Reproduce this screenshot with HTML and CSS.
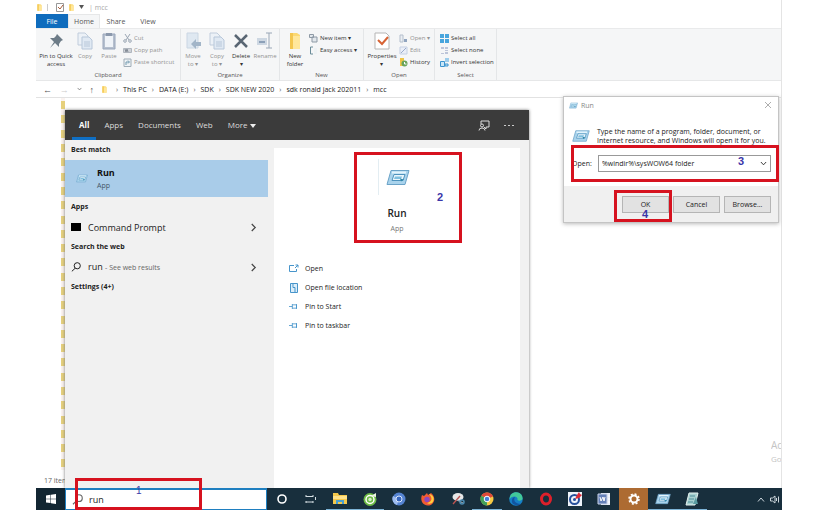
FILE: index.html
```html
<!DOCTYPE html>
<html lang="en">
<head>
<meta charset="utf-8">
<title>Run</title>
<link rel="stylesheet" href="styles.css">
</head>
<body>
<svg class="defs" aria-hidden="true">
  <symbol id="run" viewBox="0 0 24 16">
    <path d="M5 1h18l-4 14H1z" fill="#a9d3ec" stroke="#6ba3c8"/>
    <path d="M6 3h14" stroke="#e3f4fd" stroke-width="2"/>
    <path d="M8 5h11l-2 6H6z" fill="#eaf6fc" stroke="#4f93bd"/>
    <path d="M9 7h7l-1 2.500H8z" fill="#7fbfdf"/>
    <path d="M14 9l4 1-3 2z" fill="#2f86a8"/>
  </symbol>
  <symbol id="chev" viewBox="0 0 8 10"><path d="M2 1l4 4-4 4" fill="none" stroke="currentColor" stroke-width="1.400"/></symbol>
  <symbol id="down" viewBox="0 0 8 5"><path d="M1 .8L4 4 7 .8" fill="none" stroke="currentColor"/></symbol>
  <symbol id="lens" viewBox="0 0 12 12"><circle cx="7.500" cy="4.500" r="3.700" fill="none" stroke="currentColor" stroke-width="1.200"/><path d="M5 7.500L1 11.200" stroke="currentColor" stroke-width="1.200"/></symbol>
  <symbol id="folder" viewBox="0 0 12 18"><path d="M1 1h7l3 2v14H1z" fill="#fbd872"/><path d="M4 4h7v13H4z" fill="#ffe79b"/><path d="M1 1h3v16H1z" fill="#f3c64f"/></symbol>
  <symbol id="copy" viewBox="0 0 16 18"><path d="M1 1h7l3 3v9H1z" fill="#eaf0f7" stroke="#b4c3d6"/><path d="M5 5h7l3 3v9H5z" fill="#dbe6f3" stroke="#a9bcd3"/><path d="M7 10h6M7 12h6M7 14h6" stroke="#a9bcd3"/></symbol>
  <symbol id="pin" viewBox="0 0 12 8"><path d="M0 4h4M4 1v6M4 2h5v4H4M9 1v6" fill="none" stroke="#4795cb"/></symbol>
</svg>

<main class="desktop">
  <section class="explorer">
    <header class="titlebar">
      <svg width="5" height="9"><use href="#folder"/></svg>
      <span class="bar"></span>
      <svg width="8" height="9" viewBox="0 0 8 9"><path d="M.5.5h7v8h-7z" fill="#fff" stroke="#999"/><path d="M2 4l2 2 3-4" fill="none" stroke="#a65c3c"/></svg>
      <svg width="5" height="9"><use href="#folder"/></svg>
      <svg width="5" height="4" viewBox="0 0 5 4"><path d="M0 0h5L2.500 4z" fill="#555"/></svg>
      <span class="title">| mcc</span>
    </header>
    <nav class="tabs">
      <button class="tab file">File</button><button class="tab active">Home</button><button class="tab">Share</button><button class="tab">View</button>
    </nav>
    <div class="ribbon">
      <section class="group clipboard">
        <div class="tools">
          <button class="big wide"><svg width="16" height="18" viewBox="0 0 16 18"><path d="M9 2l6 6-2 1-2 3v3l-4-4-5 5 4-6-4-4 4 0 2-2z" fill="#6c7b87"/></svg><span>Pin to Quick<br>access</span></button>
          <button class="big off"><svg width="16" height="18"><use href="#copy"/></svg><span>Copy</span></button>
          <button class="big off"><svg width="16" height="18" viewBox="0 0 16 18"><path d="M2 2h12v15H2z" fill="#a6b2c4" stroke="#8293ad"/><path d="M4 4h8v11H4z" fill="#eef3f9"/><path d="M5 1h6v3H5z" fill="#71819a"/></svg><span>Paste</span></button>
          <div class="stack off">
            <button><svg width="9" height="9" viewBox="0 0 9 9"><path d="M2 0l4 6M7 0L3 6" stroke="#8593a3"/><circle cx="2" cy="7" r="1.300" fill="none" stroke="#8593a3"/><circle cx="7" cy="7" r="1.300" fill="none" stroke="#8593a3"/></svg>Cut</button>
            <button><svg width="9" height="9" viewBox="0 0 9 9"><path d="M.5 2.500h8v4h-8z" fill="#c6cbd2" stroke="#9fa7b1"/><path d="M2 3l1 3 1-3 1 3" fill="none" stroke="#68727e"/></svg>Copy path</button>
            <button><svg width="9" height="9" viewBox="0 0 9 9"><path d="M1 1h7v7.500H1z" fill="#eef3f6" stroke="#8b9ba8"/><path d="M3 7V4h3M5 2.500L6.500 4 5 5.500" fill="none" stroke="#53839e"/></svg>Paste shortcut</button>
          </div>
        </div>
        <h2>Clipboard</h2>
      </section>
      <section class="group organize">
        <div class="tools">
          <button class="big off"><svg width="16" height="18" viewBox="0 0 16 18"><path d="M2 1h11v15H2z" fill="#dae5f0" stroke="#c0cfde"/><path d="M16 10v4h-5v3l-5-5 5-5v3z" fill="#8ea6bd"/></svg><span>Move<br>to ▾</span></button>
          <button class="big off"><svg width="16" height="18"><use href="#copy"/></svg><span>Copy<br>to ▾</span></button>
          <button class="big"><svg width="16" height="18" viewBox="0 0 16 18"><path d="M2 3l12 12M14 3L2 15" stroke="#596673" stroke-width="2.500"/></svg><span>Delete<br>▾</span></button>
          <button class="big off"><svg width="16" height="18" viewBox="0 0 16 18"><path d="M0 6h10v7H0z" fill="#c4d0de"/><path d="M2 9h6v2H2z" fill="#728ba9"/><path d="M9 1h6M12 1v15M9 16h6" fill="none" stroke="#8394a8"/></svg><span>Rename</span></button>
        </div>
        <h2>Organize</h2>
      </section>
      <section class="group new">
        <div class="tools">
          <button class="big"><svg width="14" height="18"><use href="#folder"/></svg><span>New<br>folder</span></button>
          <div class="stack">
            <button><svg width="9" height="9" viewBox="0 0 9 9"><path d="M.5.5h4v3h-4zM3 3h5v5H3z" fill="#e2e7ec" stroke="#8d99a5"/></svg>New item ▾</button>
            <button><svg width="9" height="9" viewBox="0 0 9 9"><path d="M4 1H1.500v7H4" fill="none" stroke="#6b8c99"/><path d="M5 2h3v6H5z" fill="#eef2f4"/></svg>Easy access ▾</button>
          </div>
        </div>
        <h2>New</h2>
      </section>
      <section class="group open">
        <div class="tools">
          <button class="big props"><svg width="16" height="18" viewBox="0 0 16 18"><path d="M1 1h11l3 3v13H1z" fill="#fff" stroke="#b5b5b5"/><path d="M4 8l4 4 6-7" fill="none" stroke="#d76334" stroke-width="2"/></svg><span>Properties<br>▾</span></button>
          <div class="stack">
            <button class="off"><svg width="9" height="9" viewBox="0 0 9 9"><path d="M1 1h3v7H1z" fill="#e8edf3" stroke="#a5b2c2"/><path d="M5 5h3v3H5z" fill="#7790b2"/></svg>Open ▾</button>
            <button class="off"><svg width="9" height="9" viewBox="0 0 9 9"><path d="M1 1h7v7H1z" fill="#e8edf7" stroke="#b9c7df"/><path d="M2 7l5-5" stroke="#8399c0"/></svg>Edit</button>
            <button><svg width="9" height="9" viewBox="0 0 9 9"><path d="M1 0h4v8H1z" fill="#edc547"/><circle cx="5.500" cy="5.500" r="3" fill="#69a45c"/><path d="M5.500 4v2h2" fill="none" stroke="#fff"/></svg>History</button>
          </div>
        </div>
        <h2>Open</h2>
      </section>
      <section class="group select">
        <div class="tools">
          <div class="stack">
            <button><svg width="9" height="9" viewBox="0 0 9 9"><path d="M0 0h4v4H0zM5 0h4v4H5zM0 5h4v4H0zM5 5h4v4H5z" fill="#48a5dd"/></svg>Select all</button>
            <button><svg width="9" height="9" viewBox="0 0 9 9"><path d="M1 1h3v2H1zM5 1h3v2H5zM5 4h3v1H5zM1 7h3v1H1zM5 6h3v2H5z" fill="#bdc5d9"/></svg>Select none</button>
            <button><svg width="9" height="9" viewBox="0 0 9 9"><path d="M5 0h4v4H5z" fill="#9ecdeb"/><path d="M.5 3.500h4v5h-4zM5 6h3v2H5z" fill="#cae6f7" stroke="#3c94cf"/></svg>Invert selection</button>
          </div>
        </div>
        <h2>Select</h2>
      </section>
    </div>
    <nav class="address">
      <span class="arrows"><span>←</span><span class="faint">→</span><svg width="5" height="4"><use href="#down"/></svg><span>↑</span></span>
      <svg width="5" height="9"><use href="#folder"/></svg>
      <ol>
        <li>This PC</li><li>DATA (E:)</li><li>SDK</li><li>SDK NEW 2020</li><li>sdk ronald jack 202011</li><li>mcc</li>
      </ol>
    </nav>
    <div class="files">
      <ul class="tree"><li></li><li></li><li></li><li></li><li></li><li></li><li></li><li></li><li></li><li></li><li></li><li></li><li></li><li></li><li></li><li></li><li></li><li></li><li></li><li></li><li></li><li></li><li></li><li></li><li></li><li></li></ul>
      <p class="watermark">Ac<br><small>Go</small></p>
    </div>
    <footer class="status">17 items</footer>
  </section>

  <section class="search">
    <nav class="scopes">
      <button class="scope on">All</button><button class="scope">Apps</button><button class="scope">Documents</button><button class="scope">Web</button><button class="scope">More <svg width="6" height="4" viewBox="0 0 6 4"><path d="M0 0h6L3 4z" fill="#eee"/></svg></button>
      <span class="extras">
        <svg width="12" height="11" viewBox="0 0 12 11"><path d="M3 4V1h8v6H8v2L6 7" fill="none" stroke="#ddd"/><circle cx="4" cy="5.500" r="1.500" fill="none" stroke="#ddd"/><path d="M1 10.500Q1 8 4 8t3 2.500" fill="none" stroke="#ddd"/></svg>
        <svg width="10" height="3" viewBox="0 0 10 3"><path d="M0 1h2v1H0zM4 1h2v1H4zM8 1h2v1H8z" fill="#ccc"/></svg>
      </span>
    </nav>
    <div class="panes">
      <div class="results">
        <h3>Best match</h3>
        <a class="best" href="#run"><svg width="12" height="9"><use href="#run"/></svg><span><b>Run</b><small>App</small></span></a>
        <h3>Apps</h3>
        <a class="row" href="#cmd"><svg width="10" height="8" viewBox="0 0 10 8"><path d="M0 0h10v8H0z"/></svg><span>Command Prompt</span><svg class="go" width="7" height="9"><use href="#chev"/></svg></a>
        <h3>Search the web</h3>
        <a class="row" href="#web"><svg width="10" height="10"><use href="#lens"/></svg><span>run <small>- See web results</small></span><svg class="go" width="7" height="9"><use href="#chev"/></svg></a>
        <h3>Settings (4+)</h3>
      </div>
      <div class="detail">
        <div class="app">
          <span class="tile"><svg width="24" height="17"><use href="#run"/></svg></span>
          <b>Run</b><small>App</small>
          <span class="mark box2"><i>2</i></span>
        </div>
        <ul class="actions">
          <li><a href="#open"><svg width="10" height="9" viewBox="0 0 10 9"><path d="M5 1.500H.5v6h7V5M6 4l3-3M6.500 1H9v2.500" fill="none" stroke="#4795cb"/></svg>Open</a></li>
          <li><a href="#loc"><svg width="10" height="10" viewBox="0 0 10 10"><path d="M1.500.5h7v9h-7zM4 .5v4h2V9" fill="#dceefa" stroke="#4795cb"/></svg>Open file location</a></li>
          <li><a href="#start"><svg width="10" height="7"><use href="#pin"/></svg>Pin to Start</a></li>
          <li><a href="#bar"><svg width="10" height="7"><use href="#pin"/></svg>Pin to taskbar</a></li>
        </ul>
      </div>
    </div>
  </section>

  <form class="dialog">
    <header><svg width="9" height="7"><use href="#run"/></svg><span>Run</span><svg class="close" width="6" height="6" viewBox="0 0 6 6"><path d="M0 0l6 6M6 0L0 6" stroke="#999" stroke-width=".8"/></svg></header>
    <p class="intro"><svg width="18" height="14"><use href="#run"/></svg><span>Type the name of a program, folder, document, or<br>Internet resource, and Windows will open it for you.</span></p>
    <div class="field"><label for="cmdline">Open:</label><span class="combo"><input id="cmdline" type="text" value="%windir%\sysWOW64 folder"><svg width="7" height="5"><use href="#down"/></svg></span></div>
    <footer><button type="button" class="ok">OK</button><button type="button">Cancel</button><button type="button">Browse...</button></footer>
    <span class="mark box3"><i>3</i></span>
    <span class="mark box4"><i>4</i></span>
  </form>

  <nav class="taskbar">
    <button class="start" aria-label="Start"><svg width="10" height="10" viewBox="0 0 10 10"><path d="M0 1.500l4.500-.7v3.900H0zM5 .7L10 0v4.700H5zM0 5.200h4.500v3.900L0 8.500zM5 5.200h5V10l-5-.8z" fill="#fff"/></svg></button>
    <div class="find"><label for="q"><svg width="11" height="11"><use href="#lens"/></svg></label><input id="q" type="text" value="run" aria-label="Search"><span class="mark box1"><i>1</i></span></div>
    <div class="pinned">
      <button aria-label="Cortana"><svg width="16" height="16" viewBox="0 0 16 16"><circle cx="8" cy="8" r="4" fill="none" stroke="#fff" stroke-width="1.600"/></svg></button>
      <button aria-label="Task view"><svg width="16" height="16" viewBox="0 0 16 16"><path d="M3 5.500h7M3 11h7M3 4v2M10 4v2M3 10v2M10 10v2M12.500 6v3" fill="none" stroke="#d5dfe4"/></svg></button>
      <button class="live" aria-label="Files"><svg width="16" height="16" viewBox="0 0 16 16"><path d="M1 2h5l1 2h8v9H1z" fill="#f4c84b"/><path d="M1 5h14v3H1z" fill="#ffe28a"/><path d="M4 13V9h8v4H10v-2H6v2z" fill="#4ba0d0"/></svg></button>
      <button class="live" aria-label="Coc Coc"><svg width="16" height="16" viewBox="0 0 16 16"><circle cx="8" cy="8.500" r="6.500" fill="#6cbb45"/><circle cx="8" cy="8.500" r="4" fill="none" stroke="#fff" stroke-width="1.500"/><circle cx="8" cy="8.500" r="1.700" fill="#d9efcb"/><path d="M9 5l5-3v4z" fill="#e9f5df"/></svg></button>
      <button aria-label="Chromium"><svg width="16" height="16" viewBox="0 0 16 16"><circle cx="8" cy="8" r="6.500" fill="#5584d2"/><path d="M8 8L2 5a6.500 6.500 0 0 0 4 9z" fill="#9dbcf0"/><circle cx="8" cy="8" r="3" fill="#3565bd" stroke="#dce8fb"/></svg></button>
      <button aria-label="Firefox"><svg width="16" height="16" viewBox="0 0 16 16"><path d="M2 4l2 1 3-3 1 2 3-2c4 3 4 8 2 10-3 4-9 3-11-1-1-2-1-5 0-7z" fill="#f15b32"/><path d="M9 3c5 1 6 6 3 9-2 1-4 1-5 0 5-1 6-5 2-9z" fill="#ffcf3d"/><circle cx="7" cy="8.500" r="2.700" fill="#8f48bd"/></svg></button>
      <button aria-label="Snip"><svg width="16" height="16" viewBox="0 0 16 16"><ellipse cx="8" cy="6" rx="5.500" ry="4" fill="#e7e8e8"/><path d="M3 13l7-8" stroke="#bb5350" stroke-width="1.300"/><path d="M7 9l6 3" stroke="#8fa3b0" stroke-width="1.200"/><circle cx="12" cy="11" r="2" fill="none" stroke="#4d8bb1" stroke-width="1.500"/></svg></button>
      <button class="live" aria-label="Chrome"><svg width="16" height="16" viewBox="0 0 16 16"><circle cx="8" cy="8" r="6.500" fill="#f6c944"/><path d="M8 8L2.400 4.700A6.500 6.500 0 0 1 14 5.500z" fill="#df4939"/><path d="M8 8L2.400 4.700A6.500 6.500 0 0 0 8 14.500z" fill="#42a15a"/><circle cx="8" cy="8" r="2.800" fill="#467fda" stroke="#fff"/></svg></button>
      <button aria-label="Edge"><svg width="16" height="16" viewBox="0 0 16 16"><circle cx="8" cy="8" r="6.800" fill="#1680c8"/><path d="M1.500 8C2 3 5 1 8.500 1.200 13 1.500 15 5 14.500 8c-1 2-4 2-5 1 1-4-5-5-8-1z" fill="#42c99a"/><path d="M7 6c-2 3 0 7 6 7-5 3-10 0-9-4 0-2 2-3 3-3z" fill="#1255a0"/></svg></button>
      <button aria-label="Opera"><svg width="16" height="16" viewBox="0 0 16 16"><ellipse cx="8" cy="8" rx="4.500" ry="5" fill="none" stroke="#de202b" stroke-width="3"/></svg></button>
      <button aria-label="Target"><svg width="16" height="16" viewBox="0 0 16 16"><path d="M1 1h14v14H1z" fill="#eef3fa"/><circle cx="7.500" cy="8.500" r="4.500" fill="none" stroke="#264f9b" stroke-width="2"/><circle cx="7.500" cy="8.500" r="1.500" fill="#264f9b"/><path d="M8 8l2-4 2-3 1 2 2 1-3 3z" fill="#dc2937"/></svg></button>
      <button aria-label="Word"><svg width="16" height="16" viewBox="0 0 16 16"><path d="M5 2h9v12H5z" fill="#e8edf7"/><path d="M2 3h9v10H2z" fill="#6480b8" stroke="#c8d3e8"/><path d="M4 6l1 4 2-4 1 4 1-4M12 5h2M12 8h2M12 11h2" fill="none" stroke="#fff"/></svg></button>
      <button class="gear" aria-label="Settings"><svg width="16" height="16" viewBox="0 0 16 16"><circle cx="8" cy="8" r="3.500" fill="none" stroke="#fff" stroke-width="2"/><circle cx="8" cy="8" r="5" fill="none" stroke="#fff" stroke-width="1.500" stroke-dasharray="2 1.930"/></svg></button>
      <button class="live" aria-label="Run"><svg width="16" height="12"><use href="#run"/></svg></button>
      <button class="live" aria-label="Notepad"><svg width="16" height="16" viewBox="0 0 16 16"><path d="M5 2h9l-3 12H2z" fill="#a7d0cf" stroke="#e4f1ee"/><path d="M6 5h5M5 8h5M4 11h5" stroke="#4e8f99"/><path d="M12 6l2 7H9z" fill="#5a9ba0"/></svg></button>
    </div>
    <div class="tray"><svg width="8" height="5" viewBox="0 0 8 5"><path d="M1 4.500L4 1l3 3.500" fill="none" stroke="#ccd6dc"/></svg><svg width="10" height="9" viewBox="0 0 10 9"><path d="M.5 3h2L5 1v7L2.500 6h-2zM6.500 3v3M8.500 1.500v6" fill="none" stroke="#ccd6dc"/></svg></div>
  </nav>
</main>
</body>
</html>
```
FILE: styles.css
```css
* { box-sizing: border-box; }
body {
  margin: 0;
  background: #fff;
  color: #222;
  font: 7px/9px "Open Sans", "Noto Sans", sans-serif;
}
h2, h3, p, ul, ol { margin: 0; padding: 0; font-weight: 400; list-style: none; }
button, input { font: inherit; color: inherit; border: 0; padding: 0; margin: 0; background: none; }
a { color: inherit; text-decoration: none; }
small { font-size: 7px; }
svg { flex: none; }
.defs { position: absolute; width: 0; height: 0; }

.desktop {
  position: relative;
  display: flex;
  flex-direction: column;
  min-height: 100vh;
  margin: 0 33px 0 36px;
  overflow: hidden;
}

/* Explorer window */
.explorer { flex: 1; display: flex; flex-direction: column; border-right: 1px solid #e4e4e4; }
.titlebar { display: flex; align-items: center; gap: 5px; height: 14px; padding-left: 1px; color: #aaa; }
.titlebar .bar { width: 1px; height: 7px; margin-right: 3px; background: #ccc; }
.tabs { display: flex; height: 14px; }
.tab { width: 32px; color: #555; }
.tab.file { background: #0f6cbd; color: #fff; }
.tab.active { background: #f5f6f7; border: 1px solid #e6e7e8; border-bottom: 0; }
.ribbon {
  display: flex;
  height: 53px;
  background: #f5f6f7;
  border-top: 1px solid #e9eaeb;
  border-bottom: 1px solid #e6e7e8;
  color: #333;
  font-size: 6px;
  line-height: 8px;
}
.group { display: flex; flex-direction: column; border-right: 1px solid #e4e6e8; }
.clipboard { width: 145px; }
.organize { width: 99px; }
.new { width: 84px; }
.open { width: 71px; }
.select { width: 62px; }
.tools { flex: 1; display: flex; padding: 3px 0 0 3px; }
.organize .tools { padding-left: 0; }
.group h2 { font-size: 6px; text-align: center; line-height: 9px; color: #555; }
.big { display: flex; flex-direction: column; align-items: center; gap: 2px; width: 24px; white-space: nowrap; }
.big.wide { width: 34px; }
.big.props { width: 30px; }
.off { color: #929292; }
.off svg { opacity: .8; }
.stack { display: flex; flex-direction: column; padding-left: 2px; }
.stack button { display: flex; align-items: center; gap: 2px; height: 12px; white-space: nowrap; }

.address { display: flex; align-items: center; height: 17px; border-bottom: 1px solid #e2e2e2; padding-left: 7px; white-space: nowrap; }
.arrows { display: flex; align-items: center; justify-content: space-between; width: 51px; margin-right: 8px; font-size: 9px; color: #555; }
.arrows .faint { color: #ccc; }
.address ol { display: flex; padding-left: 4px; }
.address li::before { content: "›"; padding: 0 5px; color: #555; }

.files { flex: 1; position: relative; display: flex; justify-content: space-between; padding-left: 25px; }
.tree { display: flex; flex-direction: column; justify-content: space-around; width: 4px; background: #fbf3f0; }
.tree li { height: 8px; background: #e6d07c; }
.watermark { align-self: flex-end; width: 10px; overflow: hidden; margin-bottom: 5px; color: #c4c4c4; font-size: 10px; line-height: 13px; }
.watermark small { font-size: 8px; }
.status { height: 18px; padding: 6px 0 0 8px; color: #666; font-size: 7px; }

/* Search flyout */
.search {
  position: absolute;
  left: 29px;
  top: 110px;
  bottom: 22px;
  width: 464px;
  display: flex;
  flex-direction: column;
  background: #f1f1f1;
  box-shadow: 0 0 3px #777;
}
.scopes { display: flex; height: 30px; padding-left: 7px; background: #3b3b3b; color: #ddd; font-size: 8px; }
.scope { padding: 0 7px; margin-right: 1px; border-bottom: 3px solid transparent; border-top: 2px solid transparent; }
.scope.on { color: #fff; font-weight: 700; border-bottom-color: #0f6fc4; }
.extras { display: flex; align-items: center; gap: 14px; margin-left: auto; padding-right: 15px; }
.panes { flex: 1; display: flex; }
.results { width: 203px; font-size: 9px; }
.results h3 { padding-left: 6px; font-size: 7px; font-weight: 700; line-height: 20px; }
.best { display: flex; align-items: center; gap: 9px; height: 37px; padding-left: 11px; background: #a9cce9; color: #111; }
.best span { display: flex; flex-direction: column; line-height: 13px; }
.best small { color: #456; }
.row { display: flex; align-items: center; gap: 7px; height: 20px; padding: 0 11px 0 6px; }
.row small { color: #666; }
.go { margin-left: auto; color: #444; }
.detail { flex: 1; margin: 8px 9px 0 6px; background: #fff; }
.app { position: relative; display: flex; flex-direction: column; align-items: center; padding-top: 11px; font-size: 10px; }
.app b { margin-top: 11px; font-weight: 600; line-height: 14px; }
.app small { line-height: 18px; color: #777; }
.tile { display: grid; place-items: center; width: 38px; height: 36px; border-left: 1px solid #e3edf2; }
.actions { padding: 21px 0 0 15px; }
.actions a { display: flex; align-items: center; gap: 6px; height: 19px; }

/* Run dialog */
.dialog {
  position: absolute;
  top: 96px;
  right: 3px;
  width: 216px;
  background: #fff;
  border: 1px solid #c4c4c4;
  box-shadow: 0 1px 4px #bbb;
  font-size: 7px;
}
.dialog header { display: flex; align-items: center; gap: 3px; height: 16px; padding: 0 7px 0 5px; color: #888; }
.close { margin-left: auto; }
.intro { display: flex; align-items: center; gap: 7px; padding: 14px 0 0 8px; white-space: nowrap; }
.field { display: flex; align-items: center; gap: 7px; padding: 10px 7px 14px 8px; }
.field label { width: 19px; }
.combo { flex: 1; display: flex; align-items: center; height: 17px; padding: 0 3px; border: 1px solid #999; }
.combo input { flex: 1; min-width: 0; outline: 0; }
.dialog footer { display: flex; justify-content: flex-end; gap: 4px; height: 36px; padding: 10px 7px 9px; background: #f0f0f0; }
.dialog footer button { width: 47px; background: #e2e2e2; border: 1px solid #b5b5b5; }

/* Numbered step markers */
.mark { position: absolute; border: 3px solid #d6121f; pointer-events: none; }
.mark i { position: absolute; font: 700 11px/12px "Liberation Sans", sans-serif; color: #3a36a8; }
.box1 { left: 9px; right: 64px; top: -12px; bottom: -1px; }
.box1 i { left: 58px; top: 4px; font-size: 10px; font-weight: 400; }
.box2 { left: 80px; right: 58px; top: 4px; height: 91px; }
.box2 i { right: 16px; top: 36px; }
.box3 { left: 7px; right: -1px; top: 48px; height: 37px; }
.box3 i { right: 32px; top: 7px; }
.box4 { left: 50px; width: 58px; top: 93px; height: 32px; }
.box4 i { left: 25px; top: 15px; }

/* Taskbar */
.taskbar { position: relative; display: flex; height: 22px; background: #182f3d; }
.start { display: grid; place-items: center; width: 29px; background: #122632; }
.find { position: relative; display: flex; align-items: center; gap: 6px; width: 202px; padding-left: 6px; background: #fff; border: 1px solid #1f7fc0; border-top-width: 2px; font-size: 9px; }
.find label { display: flex; color: #666; }
.find input { flex: 1; min-width: 0; outline: 0; }
.pinned { display: grid; grid-template-columns: repeat(15, minmax(0, 1fr)); width: 440px; }
.pinned button { display: grid; place-items: center; }
.pinned .live { box-shadow: inset 0 -1px #7eb5d8; }
.pinned .gear { background: #ad6b32; }
.tray { display: flex; align-items: center; gap: 5px; margin-left: auto; padding-right: 2px; }
```
